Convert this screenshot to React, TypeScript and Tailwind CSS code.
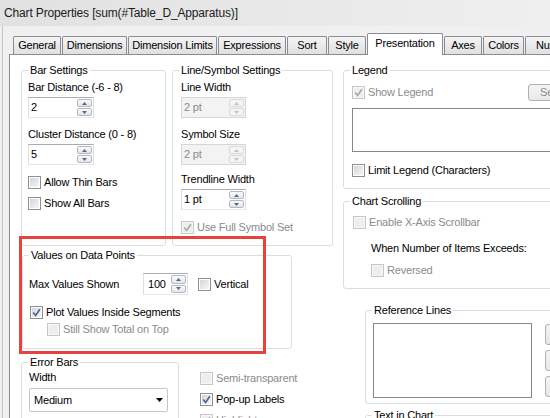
import React from 'react';

type Kids = { children?: React.ReactNode; className?: string };

const GroupBox = ({ title, className = '', children }: Kids & { title: string }) => (
  <div className={`relative shrink-0 rounded-[3px] border border-[#d5dfe5] ${className}`}>
    <span className="absolute -top-[7px] left-[6px] whitespace-nowrap bg-white px-[2px] leading-[13px]">{title}</span>
    {children}
  </div>
);

const Label = ({ children, className = '' }: Kids) => (
  <div className={`h-[13px] whitespace-nowrap leading-[13px] ${className}`}>{children}</div>
);

const CheckBox = ({ label, checked = false, disabled = false, className = '' }: { label: string; checked?: boolean; disabled?: boolean; className?: string }) => (
  <div className={`flex h-[13px] items-center whitespace-nowrap ${className}`}>
    <span className={`flex h-[13px] w-[13px] shrink-0 border p-px ${disabled ? 'border-[#c6c6c6] bg-[#f7f7f7]' : 'border-[#8e8f8f] bg-white'}`}>
      <span className={`relative h-full w-full ${disabled ? 'bg-[#eeeeee]' : 'bg-linear-to-br from-[#d3d5d9] to-[#f7f7f7]'}`}>
        {checked && (
          <svg viewBox="0 0 9 9" className="absolute left-0 top-0 h-[9px] w-[9px]">
            <path d="M1.2 4.6 L3.6 7.4 L7.9 1.2" fill="none" stroke={disabled ? '#a9a9a9' : '#4b5f99'} strokeWidth="1.6" />
          </svg>
        )}
      </span>
    </span>
    <span className={`ml-[3px] leading-[13px] ${disabled ? 'text-[#8b8b8b]' : ''}`}>{label}</span>
  </div>
);

const Arrow = ({ up, disabled }: { up?: boolean; disabled?: boolean }) => (
  <svg width="5" height="3" viewBox="0 0 5 3">
    <path d={up ? 'M0 3 L2.5 0 L5 3Z' : 'M0 0 L5 0 L2.5 3Z'} fill={disabled ? '#c2c2c2' : '#4f6a90'} />
  </svg>
);

const SpinBtn = ({ up, disabled }: { up?: boolean; disabled?: boolean }) => (
  <div className={`flex flex-1 items-center justify-center rounded-[2px] border ${disabled ? 'border-[#d7d9dc] bg-[#f4f4f4]' : 'border-[#b5b9bf] bg-linear-to-b from-[#fbfbfb] to-[#e2e5ea]'}`}>
    <Arrow up={up} disabled={disabled} />
  </div>
);

const Spin = ({ value, disabled = false, className = '' }: { value: string; disabled?: boolean; className?: string }) => (
  <div className={`flex border ${disabled ? 'border-[#d3d6db] bg-[#f3f3f3] text-[#8b8b8b]' : 'border-[#abadb3] border-x-[#dbdfe6] border-b-[#e3e9ef] bg-white'} ${className}`}>
    <span className="flex-1 self-center pl-[2px] leading-[13px]">{value}</span>
    <div className="flex w-[17px] flex-col gap-px p-px">
      <SpinBtn up disabled={disabled} />
      <SpinBtn disabled={disabled} />
    </div>
  </div>
);

const Tab = ({ label, width, active = false }: { label: string; width: string; active?: boolean }) => (
  <div
    className={`flex shrink-0 items-center justify-center whitespace-nowrap rounded-t-[2px] border border-b-0 border-[#898c95] ${width} ${
      active ? 'relative z-10 -mb-px h-[22px] bg-white pb-[2px]' : 'h-[18px] bg-linear-to-b from-[#f4f4f4] to-[#e0e0e0]'
    }`}
  >
    {label}
  </div>
);

export default function App() {
  return (
    <div className="flex h-[418px] w-[550px] flex-col overflow-hidden bg-[#f0f0f0] font-['Liberation_Sans',Arial,sans-serif] text-[11px] tracking-[-0.2px] text-black">
      <div className="h-[26px] shrink-0 whitespace-nowrap bg-linear-to-r from-[#e1e1e1] to-[#efefef] pl-[4px] pt-[5px] text-[12px] leading-[16px] tracking-[-0.15px] text-[#1b1b1b]">
        Chart Properties [sum(#Table_D_Apparatus)]
      </div>

      <div className="ml-[2px] flex flex-1 flex-col border-l border-[#c4c4c4] pl-[6px]">
        {/* tabs */}
        <div className="flex h-[28px] shrink-0 items-end gap-px pl-[4px]">
          <Tab label="General" width="w-[48px]" />
          <Tab label="Dimensions" width="w-[65px]" />
          <Tab label="Dimension Limits" width="w-[89px]" />
          <Tab label="Expressions" width="w-[68px]" />
          <Tab label="Sort" width="w-[40px]" />
          <Tab label="Style" width="w-[38px]" />
          <Tab label="Presentation" width="w-[76px]" active />
          <Tab label="Axes" width="w-[38px]" />
          <Tab label="Colors" width="w-[41px]" />
          <Tab label="Number" width="w-[60px]" />
        </div>

        {/* tab page */}
        <div className="flex flex-1 items-start border-l border-t border-[#898c95] bg-white pl-[11px] pt-[15px]">
          {/* left area */}
          <div className="flex w-[312px] shrink-0 flex-col">
            <div className="flex gap-[6px]">
              <GroupBox title="Bar Settings" className="h-[176px] w-[145px] pl-[6px] pt-[10px]">
                <Label>Bar Distance (-6 - 8)</Label>
                <Spin value="2" className="mt-[3px] h-[21px] w-[66px]" />
                <Label className="mt-[10px]">Cluster Distance (0 - 8)</Label>
                <Spin value="5" className="mt-[3px] h-[21px] w-[66px]" />
                <CheckBox label="Allow Thin Bars" className="mt-[11px]" />
                <CheckBox label="Show All Bars" className="mt-[8px]" />
              </GroupBox>

              <GroupBox title="Line/Symbol Settings" className="h-[176px] w-[161px] pl-[8px] pt-[10px]">
                <Label>Line Width</Label>
                <Spin value="2 pt" disabled className="mt-[3px] h-[21px] w-[65px]" />
                <Label className="mt-[10px]">Symbol Size</Label>
                <Spin value="2 pt" disabled className="mt-[3px] h-[21px] w-[65px]" />
                <Label className="mt-[8px]">Trendline Width</Label>
                <Spin value="1 pt" className="mt-[3px] h-[21px] w-[65px]" />
                <CheckBox label="Use Full Symbol Set" checked disabled className="mt-[11px]" />
              </GroupBox>
            </div>

            <GroupBox title="Values on Data Points" className="ml-px mt-[9px] h-[94px] w-[270px] pl-[6px] pt-[17px]">
              <div className="flex items-center">
                <Label className="w-[114px]">Max Values Shown</Label>
                <Spin value="100" className="h-[22px] w-[45px] [&>span]:pl-[4px]" />
                <CheckBox label="Vertical" className="ml-[10px]" />
              </div>
              <CheckBox label="Plot Values Inside Segments" checked className="ml-px mt-[11px]" />
              <CheckBox label="Still Show Total on Top" disabled className="ml-[18px] mt-[4px]" />
              {/* annotation frame */}
              <div className="pointer-events-none absolute -left-[4px] -top-[20px] h-[118px] w-[247px] border-[3px] border-[#e5433b]" />
            </GroupBox>

            <div className="mt-[13px] flex">
              <GroupBox title="Error Bars" className="h-[80px] w-[158px] pl-[7px] pt-[8px]">
                <Label>Width</Label>
                <div className="mt-[4px] flex h-[24px] w-[139px] items-center justify-between rounded-[2px] border border-[#c3c7cc] bg-white pl-[4px] pr-[4px]">
                  <span className="leading-[13px]">Medium</span>
                  <svg width="7" height="4" viewBox="0 0 7 4">
                    <path d="M0 0 L7 0 L3.5 4Z" fill="#000" />
                  </svg>
                </div>
              </GroupBox>
              <div className="ml-[21px] flex flex-col gap-[8px] pt-[10px]">
                <CheckBox label="Semi-transparent" disabled />
                <CheckBox label="Pop-up Labels" checked />
                <CheckBox label="Highlight" checked disabled />
              </div>
            </div>
          </div>

          {/* right column */}
          <div className="ml-[10px] flex w-[260px] shrink-0 flex-col">
            <GroupBox title="Legend" className="h-[119px] w-[300px] pl-[8px] pt-[13px]">
              <div className="flex h-[17px] items-center">
                <div className="w-[176px]">
                  <CheckBox label="Show Legend" checked disabled />
                </div>
                <div className="flex h-[17px] w-[75px] items-center rounded-[3px] border border-[#adb2b5] bg-linear-to-b from-[#f4f4f4] to-[#e9e9e9] pl-[11px] text-[#8b8b8b]">
                  Settings...
                </div>
              </div>
              <div className="mt-[7px] h-[44px] w-[250px] border border-[#828790] bg-white" />
              <CheckBox label="Limit Legend (Characters)" className="mt-[12px]" />
            </GroupBox>

            <GroupBox title="Chart Scrolling" className="mt-[12px] h-[88px] w-[300px] pl-[9px] pt-[14px]">
              <CheckBox label="Enable X-Axis Scrollbar" disabled />
              <Label className="ml-[18px] mt-[13px]">When Number of Items Exceeds:</Label>
              <CheckBox label="Reversed" disabled className="ml-[18px] mt-[9px]" />
            </GroupBox>

            <GroupBox title="Reference Lines" className="ml-[22px] mt-[21px] flex h-[94px] w-[300px] items-start pl-[7px] pt-[12px]">
              <div className="h-[75px] w-[159px] shrink-0 border border-[#828790] bg-white" />
              <div className="ml-[13px] flex flex-col gap-[5px] pt-px">
                <div className="h-[21px] w-[70px] rounded-[3px] border border-[#adb2b5] bg-linear-to-b from-[#f4f4f4] to-[#e6e6e6]" />
                <div className="h-[21px] w-[70px] rounded-[3px] border border-[#adb2b5] bg-linear-to-b from-[#f4f4f4] to-[#e6e6e6]" />
                <div className="h-[21px] w-[70px] rounded-[3px] border border-[#adb2b5] bg-linear-to-b from-[#f4f4f4] to-[#e6e6e6]" />
              </div>
            </GroupBox>

            <GroupBox title="Text in Chart" className="ml-[22px] mt-[11px] h-[60px] w-[300px]" />
          </div>
        </div>
      </div>
    </div>
  );
}
